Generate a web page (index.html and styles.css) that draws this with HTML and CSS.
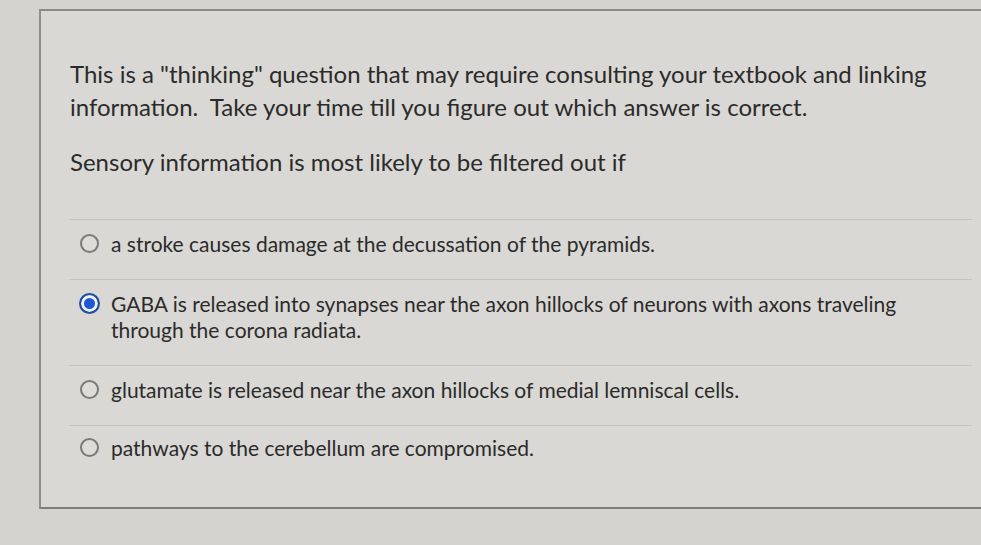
FILE: index.html
```html
<!DOCTYPE html>
<html>
<head>
<meta charset="utf-8">
<link rel="stylesheet" href="styles.css">
</head>
<body>
<div class="panel">
  <div class="question">
    <p class="q-intro">This is a "thinking" question that may require consulting your textbook and linking information.&nbsp; Take your time till you figure out which answer is correct.</p>
    <p class="q-stem">Sensory information is most likely to be filtered out if</p>
  </div>
  <div class="answers">
    <label class="answer">
      <span class="radio"></span>
      <span class="answer-text">a stroke causes damage at the decussation of the pyramids.</span>
    </label>
    <label class="answer">
      <span class="radio radio-checked"></span>
      <span class="answer-text">GABA is released into synapses near the axon hillocks of neurons with axons traveling through the corona radiata.</span>
    </label>
    <label class="answer">
      <span class="radio"></span>
      <span class="answer-text">glutamate is released near the axon hillocks of medial lemniscal cells.</span>
    </label>
    <label class="answer answer-last">
      <span class="radio"></span>
      <span class="answer-text">pathways to the cerebellum are compromised.</span>
    </label>
  </div>
</div>
</body>
</html>
```

FILE: styles.css
```css
html, body {
  margin: 0;
  padding: 0;
}
body {
  background: #d4d3cf;
  font-family: Lato, "Open Sans", sans-serif;
  color: #2b2b2b;
  width: 981px;
  height: 545px;
  overflow: hidden;
}
.panel {
  margin: 9px 0 0 39px;
  width: 960px;
  height: 500px;
  border-top: 2px solid #8a8a88;
  border-left: 2px solid #8e8e8c;
  border-bottom: 2px solid #7e7e7c;
  background: #d9d8d4;
  box-sizing: border-box;
}
.question {
  padding: 46px 0 0 29px;
}
.question p {
  margin: 0;
  font-size: 24px;
  line-height: 33px;
  width: 880px;
}
.q-intro {
  margin-bottom: 22px !important;
}
.answers {
  margin: 41px 0 0 28px;
  width: 903px;
}
.answer {
  display: flex;
  align-items: flex-start;
  border-top: 1px solid #c4c3bf;
  padding: 11px 0 22px 11px;
  font-size: 21px;
  line-height: 26px;
}
.answer-last {
  padding-top: 9px;
}
.radio {
  flex: none;
  width: 15px;
  height: 15px;
  border: 2px solid #7a7a7a;
  border-radius: 50%;
  margin: 3px 12px 0 0;
  background: #dddcd8;
}
.radio-checked {
  width: 17px;
  height: 17px;
  margin: 2px 11px 0 -1px;
  border: 2px solid #1f4f9e;
  background: #1b5ad2;
  box-shadow: inset 0 0 0 3px #f2f2f2;
}
.answer-text {
  flex: 1;
  padding-right: 60px;
}
```
